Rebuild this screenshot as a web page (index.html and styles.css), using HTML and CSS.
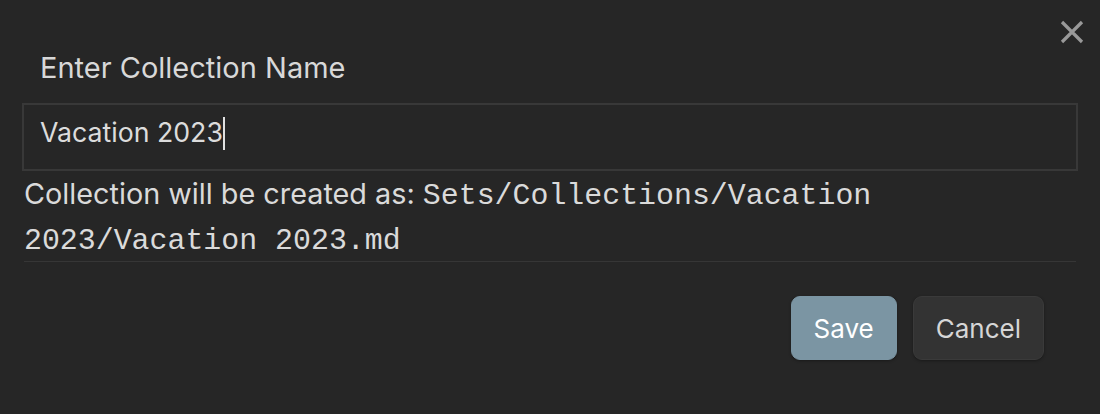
FILE: index.html
```html
<!DOCTYPE html>
<html>
<head>
<meta charset="utf-8">
<link rel="stylesheet" href="styles.css">
</head>
<body>
<div class="modal">
  <button class="close" aria-label="Close">
    <svg width="24" height="24" viewBox="0 0 24 24"><path d="M2 2 L22 22 M22 2 L2 22" stroke="#999999" stroke-width="3.2" fill="none"/></svg>
  </button>
  <div class="title">Enter Collection Name</div>
  <div class="input">Vacation 2023<span class="caret"></span></div>
  <div class="hint">Collection will be created as: <code>Sets/Collections/Vacation 2023/Vacation 2023.md</code></div>
  <div class="actions">
    <button class="btn btn-primary">Save</button>
    <button class="btn">Cancel</button>
  </div>
</div>
</body>
</html>
```
FILE: styles.css
```css
html, body {
  margin: 0;
  padding: 0;
  background: #262626;
}
body {
  width: 1100px;
  height: 414px;
  overflow: hidden;
  font-family: Inter, "Noto Sans", sans-serif;
  color: #dadada;
}
.modal {
  position: relative;
  display: flex;
  flex-direction: column;
  padding: 50px 22px 0 22px;
}
.close {
  position: absolute;
  top: 20px;
  left: 1060px;
  width: 24px;
  height: 24px;
  padding: 0;
  border: 0;
  background: none;
  display: flex;
}
.title {
  font-size: 29px;
  line-height: 36px;
  margin-left: 18px;
  color: #d8d8d8;
  margin-bottom: 17px;
}
.input {
  box-sizing: border-box;
  height: 68px;
  border: 2px solid #383838;
  padding: 9px 16px 0 16px;
  font-size: 26.7px;
  line-height: 36px;
  color: #dcdcdc;
  display: flex;
}
.caret {
  display: inline-block;
  width: 2px;
  height: 33px;
  background: #e0e0e0;
  margin-top: 3px;
  margin-left: 0;
}
.hint {
  margin: 0 2px;
  font-size: 28.8px;
  line-height: 45px;
  color: #dadada;
  border-bottom: 1px solid #363636;
}
.hint code {
  font-family: "Liberation Mono", "DejaVu Sans Mono", monospace;
  font-size: 29.9px;
  line-height: 40px;
  color: #dadada;
}
.actions {
  display: flex;
  justify-content: flex-end;
  gap: 16px;
  margin-top: 34px;
  padding-right: 34px;
}
.btn {
  font-family: Inter, "Noto Sans", sans-serif;
  font-size: 26px;
  height: 64px;
  padding: 0 22px;
  border-radius: 9px;
  border: 1px solid #3a3a3a;
  background: #333333;
  color: #d6d6d6;
  box-shadow: 0 1px 3px rgba(0,0,0,0.35);
}
.btn-primary {
  background: #7b95a3;
  border-color: #7b95a3;
  color: #ffffff;
}
```
